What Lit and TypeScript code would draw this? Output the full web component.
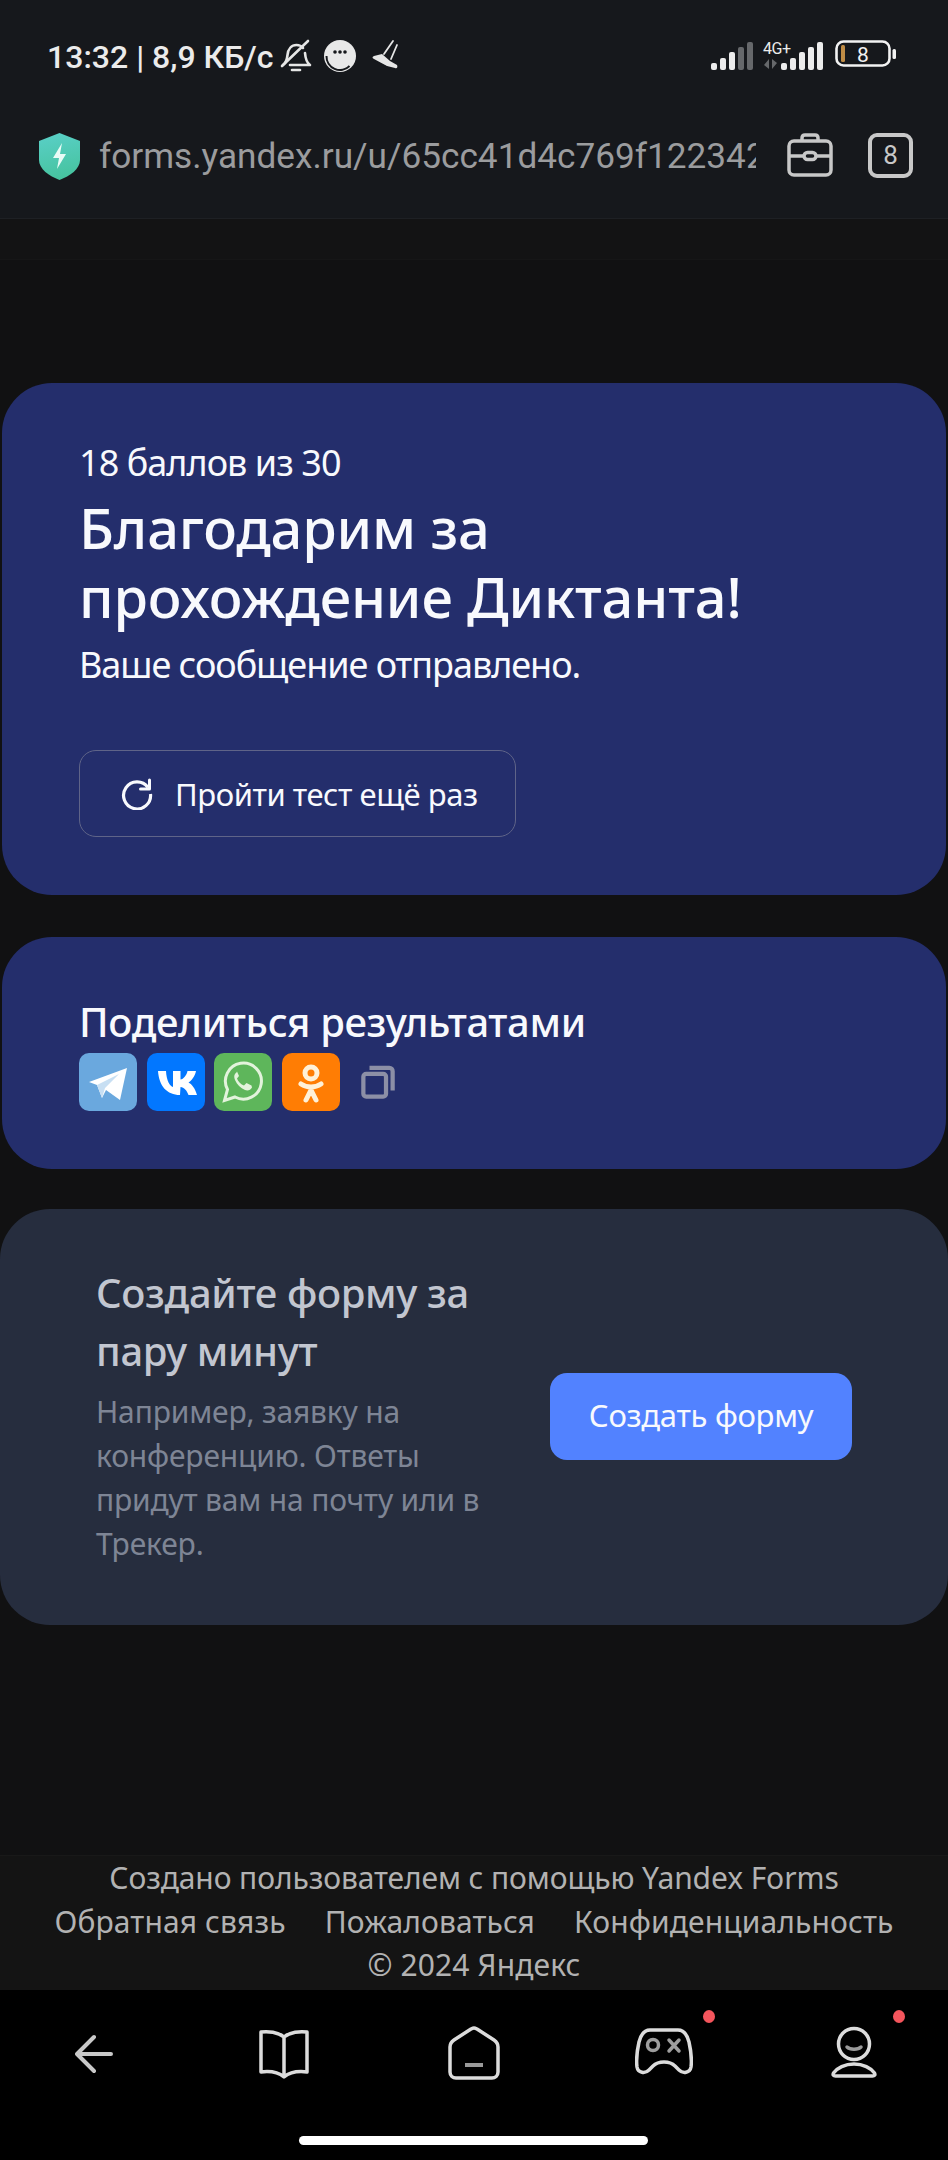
import { LitElement, html, css } from "lit";
import { customElement } from "lit/decorators.js";

@customElement("app-root")
export class AppRoot extends LitElement {
  static styles = css`
    :host { display: flex; flex-direction: column; width: 948px; height: 2160px; overflow: hidden; background: #111112; font-family: "Noto Sans", "Open Sans", sans-serif; color: #f8f9fd; }
    * { box-sizing: border-box; }
    svg { display: block; flex: none; }
    .top { background: #16181c; height: 219px; border-bottom: 1px solid #1e2024; font-family: Roboto, sans-serif; }
    .status { height: 112px; display: flex; align-items: flex-start; justify-content: space-between; padding: 39px 51px 0 47px; }
    .status-left, .status-right { display: flex; align-items: flex-start; }
    .clock { font-size: 32px; line-height: 36px; font-weight: 500; color: #ebebeb; margin-right: 7px; letter-spacing: 0; white-space: nowrap; }
    .urlbar { height: 106px; display: flex; align-items: flex-start; padding: 21px 35px 0 39px; }
    .url { width: 657px; margin-left: 19px; overflow: hidden; white-space: nowrap; font-size: 35.2px; line-height: 42px; color: #9b9c9e; padding-top: 2px; }
    .case { margin-left: 31px; }
    .tabs { margin-left: 35px; width: 45px; height: 45px; border: 4px solid #c8c8c8; border-radius: 9px; font-size: 26px; line-height: 36px; text-align: center; color: #c8c8c8; }
    .strip { height: 41px; background: #131314; border-bottom: 1px solid #161617; }
    main { flex: 1; padding-top: 123px; }
    .card { background: #242e6c; margin: 0 2px; border-radius: 50px; padding-left: 77px; }
    .result { height: 512px; padding-top: 56px; }
    .score { font-size: 36px; line-height: 48px; letter-spacing: -0.95px; }
    h1 { margin: 6px 0 0; font-size: 56px; line-height: 69px; font-weight: 500; letter-spacing: -0.15px; }
    .sent { margin-top: 9px; font-size: 36px; line-height: 50px; letter-spacing: -1.04px; }
    .retry { margin-top: 60px; width: 437px; height: 87px; border: 1.5px solid #5f6488; border-radius: 17px; display: flex; align-items: center; padding-left: 41px; gap: 22px; font-size: 31px; letter-spacing: -0.45px; }
    .share { height: 232px; margin-top: 42px; padding-top: 57px; }
    h2 { margin: 0; font-size: 40px; line-height: 55px; font-weight: 500; letter-spacing: -0.33px; }
    .socials { display: flex; align-items: center; gap: 9.7px; margin-top: 4px; }
    .copy { margin-left: 11px; }
    .promo { background: #262d3e; margin: 40px 0 0; height: 416px; border-radius: 50px; display: flex; align-items: center; justify-content: space-between; padding: 0 96px 0 96px; }
    .promo-text { width: 400px; }
    h3 { margin: -5px 0 10px; font-size: 40px; line-height: 58px; font-weight: 500; color: #c2c6d0; letter-spacing: -0.33px; }
    .promo-text p { margin: 0; font-size: 30px; line-height: 44px; color: #7e8595; letter-spacing: -0.17px; }
    .create { width: 302px; height: 87px; border-radius: 17px; background: #5282ff; display: flex; align-items: center; justify-content: center; font-size: 31px; letter-spacing: -0.3px; padding-bottom: 3px; margin-top: -1px; }
    footer { height: 135px; background: #141414; border-top: 1px solid #191919; padding-top: 0; font-size: 30px; line-height: 44px; color: #b2b2b2; text-align: center; letter-spacing: -0.1px; }
    .links { display: flex; justify-content: center; gap: 39px; letter-spacing: 0.12px; }
    .copyright { letter-spacing: 0.1px; margin-top: -1px; }
    nav { height: 170px; background: #000; position: relative; }
    .icons { display: grid; grid-template-columns: repeat(5, 190px); justify-content: center; padding-top: 36px; }
    .cell { position: relative; display: flex; justify-content: center; height: 60px; }
    .dot { position: absolute; top: -16px; left: 134px; width: 12px; height: 13px; border-radius: 50%; background: #f4555c; }
    .bar { position: absolute; left: 299px; top: 146px; width: 349px; height: 9px; border-radius: 5px; background: #fff; }
  `;

  render() {
    return html`
      <div class="top">
        <div class="status">
          <div class="status-left">
            <span class="clock">13:32 | 8,9 КБ/с</span>
            <svg width="32" height="34" viewBox="0 0 32 34" fill="none" stroke="#e6e6e6" stroke-width="2.6" stroke-linecap="round" stroke-linejoin="round"><path d="M3 26c3-2 4-5 4.500-10 .5-6 4-10 9-10 3 0 5 1 6.500 3"/><path d="M25 14c.5 6 2 10 5 12H10"/><path d="M2 27L28 2"/><path d="M12 31h8"/></svg>
            <svg style="margin-left:11px" width="34" height="34" viewBox="0 0 34 34"><circle cx="17" cy="17" r="16" fill="#e8e8e8"/><path d="M3.500 17a13.500 13.500 0 0 0 23 10" fill="none" stroke="#16181c" stroke-width="2"/><circle cx="12" cy="13" r="1.800" fill="#16181c"/><circle cx="17" cy="13" r="1.800" fill="#16181c"/><circle cx="22" cy="13" r="1.800" fill="#16181c"/></svg>
            <svg style="margin-left:14px" width="28" height="32" viewBox="0 0 28 32" fill="none"><path d="M22 2L13 15M26 6L20 20" stroke="#e6e6e6" stroke-width="1.800" stroke-linecap="round"/><path d="M11 15l8 7 7 4c1 2 0 4-2 3l-8-2-13-7c-2-1-2-2 0-3z" fill="#e6e6e6"/><path d="M3 22l17 8" stroke="#16181c" stroke-width="1.200"/></svg>
          </div>
          <div class="status-right">
            <svg width="113" height="32" viewBox="0 0 113 32" fill="#ececec" font-family="Roboto, sans-serif"><rect x="0" y="24" width="6" height="7" rx="2"/><rect x="9" y="19" width="6" height="12" rx="2"/><rect x="18" y="13" width="6" height="18" rx="2"/><rect x="27" y="8" width="6" height="23" rx="2" fill="#66686b"/><rect x="36" y="3" width="6" height="28" rx="2" fill="#66686b"/><text x="52" y="15" font-size="16" letter-spacing="-0.400">4G+</text><path d="M58 20v10l-5-4zM61 20v10l5-6z" fill="#66686b"/><rect x="70" y="24" width="6" height="7" rx="2"/><rect x="79" y="19" width="6" height="12" rx="2"/><rect x="88" y="13" width="6" height="18" rx="2"/><rect x="97" y="8" width="6" height="23" rx="2"/><rect x="106" y="3" width="6" height="28" rx="2"/></svg>
            <svg style="margin-left:11px" width="62" height="30" viewBox="0 0 62 30" font-family="Roboto, sans-serif"><rect x="1.500" y="2.500" width="53" height="24" rx="7" fill="none" stroke="#f2f2f2" stroke-width="2.600"/><rect x="6" y="6" width="4" height="17" rx="1.500" fill="#c08c45"/><text x="28" y="23" font-size="21" fill="#f2f2f2" text-anchor="middle">8</text><rect x="57.500" y="10" width="3.500" height="10" rx="1.500" fill="#f2f2f2"/></svg>
          </div>
        </div>
        <div class="urlbar">
          <svg width="41" height="47" viewBox="0 0 41 47"><defs><linearGradient id="shield" x1="0.300" y1="0" x2="0.500" y2="1"><stop offset="0" stop-color="#59cfc6"/><stop offset="1" stop-color="#46c39e"/></linearGradient></defs><path d="M20.500 0L41 8v19c0 9-10 16-20.500 20C10 43 0 36 0 27V8z" fill="url(#shield)"/><path d="M23 10l-9 15h6l-2 11 9-15h-6z" fill="#e9fbf6"/></svg>
          <div class="url">forms.yandex.ru/u/65cc41d4c769f122342e</div>
          <svg class="case" width="46" height="44" viewBox="0 0 46 44" fill="none" stroke="#c8c8c8" stroke-width="3.500"><rect x="2" y="8" width="42" height="34" rx="5"/><path d="M15 8V5c0-2 1-3 3-3h10c2 0 3 1 3 3v3M2 23h14M30 23h14"/><rect x="17" y="19.500" width="12" height="7" rx="3.500"/></svg>
          <div class="tabs">8</div>
        </div>
      </div>
      <div class="strip"></div>
      <main>
        <section class="card result">
          <div class="score">18 баллов из 30</div>
          <h1>Благодарим за<br />прохождение Диктанта!</h1>
          <div class="sent">Ваше сообщение отправлено.</div>
          <div class="retry">
            <svg width="32" height="32" viewBox="0 0 32 32" fill="none" stroke="#f8f9fd" stroke-width="3.200"><path d="M27 9.500A13.500 13.500 0 1 0 29.500 16"/><path d="M28.500 2v9h-9" stroke-width="3" stroke-linejoin="round" stroke-linecap="round"/></svg>
            <span>Пройти тест ещё раз</span>
          </div>
        </section>
        <section class="card share">
          <h2>Поделиться результатами</h2>
          <div class="socials">
            <svg width="58" height="58" viewBox="0 0 58 58"><rect width="58" height="58" rx="10" fill="#6aa8de"/><path d="M10 29L48 15 41 47 27 37 23 45 18 32z" fill="#fff"/><path d="M18 32L40 21 26 35 23 45" fill="#c7dff3"/></svg>
            <svg width="58" height="58" viewBox="0 0 58 58"><rect width="58" height="58" rx="10" fill="#0277ff"/><path d="M33 42C20 42 12 33 11 18h8c.5 10 4 15 7 16V18h7.500v8.500c3-.4 6-4 7-8.500H49c-1 5.500-4.500 9.500-7.500 11.500C44.500 31 48 35 50 42h-8.500c-1.500-4.500-4.500-7.500-8-8z" fill="#fff"/></svg>
            <svg width="58" height="58" viewBox="0 0 58 58"><rect width="58" height="58" rx="10" fill="#5eb65b"/><path d="M10.500 47.500l3-11A18 18 0 1 1 21 44z" fill="none" stroke="#e3f3dc" stroke-width="3"/><path d="M22.500 19.500c-2 1.500-3 3.500-1.500 7.500 2 4.500 5.500 8 10 10 3 1 5.500 0 7-2.500l-.5-2-5-2.500-2.500 2.500c-3-1-6-4-7-7l2-2.500-2-4.500z" fill="#e3f3dc"/></svg>
            <svg width="58" height="58" viewBox="0 0 58 58"><rect width="58" height="58" rx="10" fill="#ff7d04"/><circle cx="29" cy="20" r="6" fill="none" stroke="#fff1d8" stroke-width="5"/><path d="M19 31c6 4 14 4 20 0M29 35v3M29 37L24 47M29 37l5 10" fill="none" stroke="#fff1d8" stroke-width="5" stroke-linecap="round"/></svg>
            <svg class="copy" width="34" height="34" viewBox="0 0 36 36" fill="none" stroke="#8c8fa6" stroke-width="4.500"><rect x="2.500" y="9.500" width="24" height="24" rx="3"/><path d="M9 3h21c2 0 3.500 1.500 3.500 3.500V27"/></svg>
          </div>
        </section>
        <section class="promo">
          <div class="promo-text">
            <h3>Создайте форму за<br />пару минут</h3>
            <p>Например, заявку на<br />конференцию. Ответы<br />придут вам на почту или в<br />Трекер.</p>
          </div>
          <div class="create">Создать форму</div>
        </section>
      </main>
      <footer>
        <div>Создано пользователем с помощью Yandex Forms</div>
        <div class="links"><span>Обратная связь</span><span>Пожаловаться</span><span>Конфиденциальность</span></div>
        <div class="copyright">© 2024 Яндекс</div>
      </footer>
      <nav>
        <div class="icons">
          <div class="cell"><svg width="38" height="60" viewBox="0 0 38 60" fill="none" stroke="#c9c9c9" stroke-width="4" stroke-linecap="round" stroke-linejoin="round"><path d="M19 11L2 28l17 17M3 28h33"/></svg></div>
          <div class="cell"><svg width="50" height="60" viewBox="0 0 50 60" fill="none" stroke="#dcdcdc" stroke-width="3.500" stroke-linejoin="round"><path d="M25 11C19 6 9 5 2 6v40c8-1 17 0 23 5 6-5 15-6 23-5V6c-7-1-17 0-23 5zM25 11v40"/></svg></div>
          <div class="cell"><svg width="52" height="60" viewBox="0 0 52 60" fill="none" stroke="#dcdcdc" stroke-width="3.500" stroke-linejoin="round"><path d="M26 2c1 0 2 .5 3 1l17 11c3 2 4 4 4 7v25c0 4-3 6-6 6H8c-3 0-6-2-6-6V21c0-3 1-5 4-7L23 3c1-.5 2-1 3-1z"/><path d="M17 39h18" stroke="#9a9a9a" stroke-width="4"/></svg></div>
          <div class="cell"><svg width="58" height="60" viewBox="0 0 58 60" fill="none" stroke="#dcdcdc" stroke-width="3.500" stroke-linejoin="round"><path d="M15 4h28c6 0 9 4 11 12 2 9 3 17 2 25-1 6-8 7-12 3l-4-4c-3-3-6-4-11-4s-8 1-11 4l-4 4c-4 4-11 3-12-3-1-8 0-16 2-25C6 8 9 4 15 4z"/><circle cx="18" cy="19" r="5.500" stroke="#9d9d9d"/><path d="M34 14l10 11M44 14L34 25" stroke="#9d9d9d" stroke-linecap="round"/></svg><span class="dot"></span></div>
          <div class="cell"><svg width="46" height="60" viewBox="0 0 46 60" fill="none" stroke="#dcdcdc" stroke-width="3.500" stroke-linejoin="round"><circle cx="23" cy="18" r="15.500"/><path d="M16 21c3 3 11 3 14 0" stroke="#9a9a9a" stroke-linecap="round"/><path d="M23 38c-9 0-17 4-20.500 9-1 2 0 3 2 3h37c2 0 3-1 2-3C40 42 32 38 23 38z"/></svg><span class="dot"></span></div>
        </div>
        <div class="bar"></div>
      </nav>
    `;
  }
}
